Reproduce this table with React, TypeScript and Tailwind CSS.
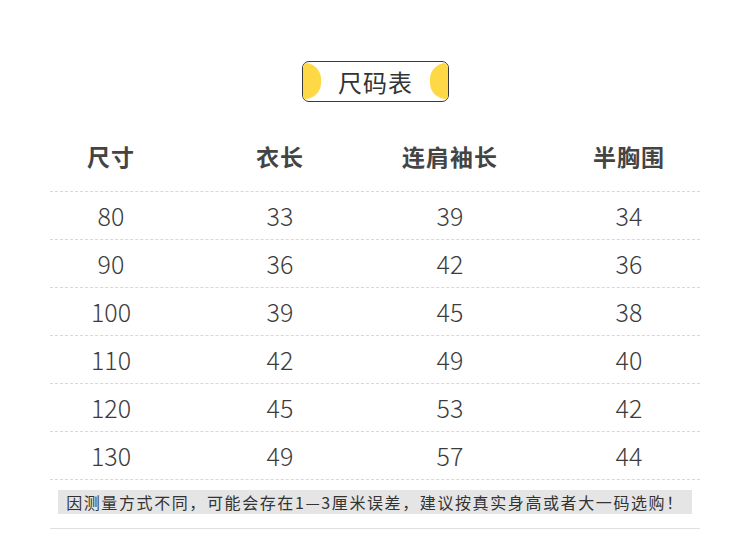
import React from 'react';

const headers = ['尺寸', '衣长', '连肩袖长', '半胸围'];

const rows: string[][] = [
  ['80', '33', '39', '34'],
  ['90', '36', '42', '36'],
  ['100', '39', '45', '38'],
  ['110', '42', '49', '40'],
  ['120', '45', '53', '42'],
  ['130', '49', '57', '44'],
];

// column widths tuned so the cell centers line up with the picture
const cellClass = [
  'flex justify-center',
  'flex justify-center',
  'flex justify-center',
  'flex justify-center pl-[46px]',
];

const TitlePill = () => (
  <div className="relative h-[41px] w-[147px] overflow-hidden rounded-[7px] border-[1.5px] border-[#3a3a3a] bg-white">
    <div className="absolute -left-[14px] top-[1px] h-[36px] w-[32px] rounded-full bg-[#ffd945]" />
    <div className="absolute -right-[14px] top-[1px] h-[36px] w-[32px] rounded-full bg-[#ffd945]" />
    <div className="relative flex h-full items-center justify-center text-[24px] leading-none text-[#333] tracking-[1px]">
      尺码表
    </div>
  </div>
);

export default function App() {
  return (
    <div
      className="h-[550px] w-[750px] bg-white"
      style={{ fontFamily: '"Noto Sans CJK SC", "Noto Sans", sans-serif' }}
    >
      <div className="flex justify-center pt-[61px] pl-[1px]">
        <TitlePill />
      </div>

      <div className="mx-[50px] mt-[33px]">
        <div className="grid h-[57px] grid-cols-[122px_216px_124px_188px] items-center border-b border-dashed border-[#d8d8d8] pb-[14px]">
          {headers.map((h, i) => (
            <div key={h} className={cellClass[i]}>
              <span className="text-[23px] font-bold leading-none text-[#444] tracking-[1px]">{h}</span>
            </div>
          ))}
        </div>

        {rows.map((row, r) => (
          <div
            key={r}
            className="grid h-[48px] grid-cols-[122px_216px_124px_188px] items-center border-b border-dashed border-[#d8d8d8]"
          >
            {row.map((v, i) => (
              <div key={i} className={cellClass[i]}>
                <span className="text-[25px] font-light leading-none text-[#3c3c3c]">{v}</span>
              </div>
            ))}
          </div>
        ))}

        <div className="mx-[8px] mt-[10px] flex h-[24px] items-center justify-center bg-[#e5e5e5]">
          <span className="text-[16px] leading-none text-[#333] tracking-[1.6px]">
            因测量方式不同，可能会存在1—3厘米误差，建议按真实身高或者大一码选购！
          </span>
        </div>

        <div className="mt-[14px] border-t border-[#e0e0e0]" />
      </div>
    </div>
  );
}
